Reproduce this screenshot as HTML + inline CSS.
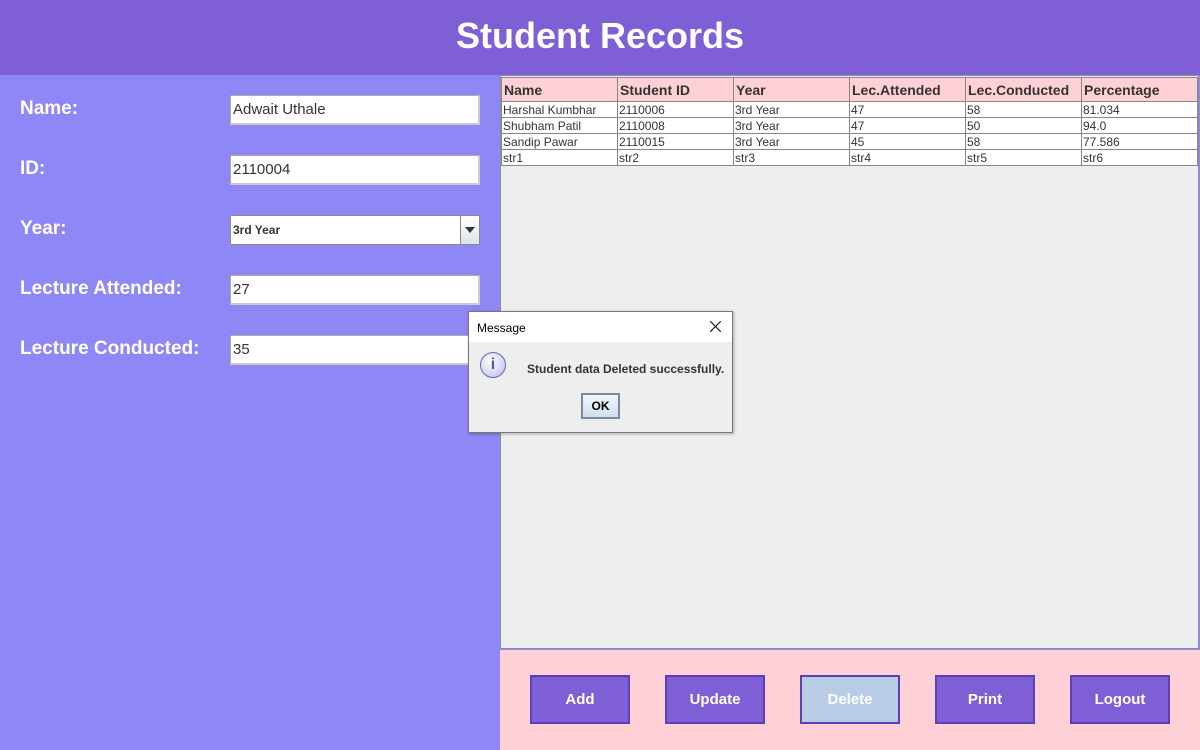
<!DOCTYPE html>
<html><head><style>
*{margin:0;padding:0;box-sizing:border-box}
body{width:1200px;height:750px;position:relative;overflow:hidden;font-family:"Liberation Sans",sans-serif;background:#8f87f5}
.hdr{position:absolute;left:0;top:0;width:1200px;height:75px;background:#7e5fd5;color:#fff;font-weight:bold;font-size:36px;text-align:center;line-height:72px}
.lbl{position:absolute;left:20px;color:#fff;font-weight:bold;font-size:19px}
.inp{position:absolute;left:230px;width:250px;height:30px;background:#fff;border:1px solid #aaa;border-right:2px solid #ccc;border-bottom:2px solid #ccc;font-size:15px;color:#333;padding:5px 2px}
.tbl{position:absolute;left:500px;top:75px;width:699px;height:574px;background:#eeeeee;border:1px solid #8a8fa0}
table{border-collapse:collapse;position:absolute;left:0;top:1px}
td{width:116px;border:1px solid #888;font-size:12px;color:#333;height:16px;padding:0 1px;line-height:14px;background:#fff}
th{width:116px;border:1px solid #888;background:#ffd0d6;font-size:14px;text-align:left;height:24px;padding:0 2px;color:#333}
.bot{position:absolute;left:500px;top:650px;width:700px;height:100px;background:#ffd0d6}
.btn{position:absolute;top:675px;width:100px;height:49px;background:#7e5fd5;border:2px solid #5b3fb8;color:#fff;font-weight:bold;font-size:15px;text-align:center;line-height:45px}
.dlg{position:absolute;left:468px;top:311px;width:265px;height:122px;background:#eeeeee;border:1px solid #777;box-shadow:1px 1px 3px rgba(0,0,0,.3)}
</style></head><body>
<div class="hdr">Student Records</div>
<div class="lbl" style="top:98px">Name:</div>
<div class="lbl" style="top:158px">ID:</div>
<div class="lbl" style="top:218px">Year:</div>
<div class="lbl" style="top:278px">Lecture Attended:</div>
<div class="lbl" style="top:338px">Lecture Conducted:</div>
<div class="inp" style="top:95px">Adwait Uthale</div>
<div class="inp" style="top:155px">2110004</div>
<div class="inp" style="top:215px;height:30px;border:1px solid #888;font-weight:bold;font-size:12px;padding-top:7px">3rd Year<div style="position:absolute;right:0;top:0;width:19px;height:28px;background:linear-gradient(#fff,#dde4ea);border-left:1px solid #888"><div style="margin:11px auto 0;width:0;height:0;border-left:5px solid transparent;border-right:5px solid transparent;border-top:6px solid #333"></div></div></div>
<div class="inp" style="top:275px">27</div>
<div class="inp" style="top:335px">35</div>
<div class="tbl"><table>
<tr><th>Name</th><th>Student ID</th><th>Year</th><th>Lec.Attended</th><th>Lec.Conducted</th><th>Percentage</th></tr>
<tr><td>Harshal Kumbhar</td><td>2110006</td><td>3rd Year</td><td>47</td><td>58</td><td>81.034</td></tr>
<tr><td>Shubham Patil</td><td>2110008</td><td>3rd Year</td><td>47</td><td>50</td><td>94.0</td></tr>
<tr><td>Sandip Pawar</td><td>2110015</td><td>3rd Year</td><td>45</td><td>58</td><td>77.586</td></tr>
<tr><td>str1</td><td>str2</td><td>str3</td><td>str4</td><td>str5</td><td>str6</td></tr>
</table></div>
<div class="bot"></div>
<div class="btn" style="left:530px">Add</div>
<div class="btn" style="left:665px">Update</div>
<div class="btn" style="left:800px;background:#b8cce6">Delete</div>
<div class="btn" style="left:935px">Print</div>
<div class="btn" style="left:1070px">Logout</div>
<div class="dlg">
<div style="height:30px;background:#fff;font-size:12px;padding:9px 8px;position:relative">Message<svg style="position:absolute;right:11px;top:9px" width="11" height="11"><path d="M0 0L11 11M11 0L0 11" stroke="#222" stroke-width="1.2"/></svg></div>
<div style="position:absolute;left:11px;top:40px;width:26px;height:26px;border-radius:50%;background:radial-gradient(circle at 40% 35%,#fff,#b8b8f0);border:1px solid #6a6ab0;text-align:center;font-weight:bold;color:#5555a0;font-size:16px;line-height:24px">i</div>
<div style="position:absolute;left:58px;top:50px;font-size:12px;font-weight:bold;color:#333">Student data Deleted successfully.</div>
<div style="position:absolute;left:112px;top:81px;width:39px;height:26px;border:2px solid #7a8aa0;background:linear-gradient(#f4f8fc,#cfdeec);font-size:12px;font-weight:bold;text-align:center;line-height:22px">OK</div>
</div>
</body></html>
